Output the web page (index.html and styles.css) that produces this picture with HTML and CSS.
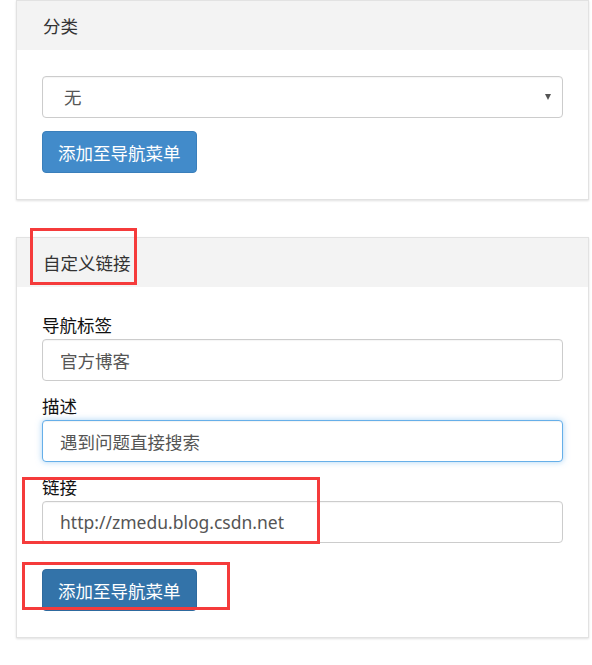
FILE: index.html
```html
<!DOCTYPE html>
<html lang="zh-CN">
<head>
<meta charset="utf-8">
<title>菜单</title>
<link rel="stylesheet" href="styles.css">
</head>
<body>
<div class="page">
  <section class="panel">
    <div class="panel-heading">分类</div>
    <div class="panel-body">
      <div class="select-wrap">
        <select class="form-control select">
          <option>无</option>
        </select>
      </div>
      <button class="btn btn-primary" type="button">添加至导航菜单</button>
    </div>
  </section>

  <section class="panel panel-second">
    <div class="panel-heading">自定义链接</div>
    <div class="panel-body">
      <div class="form-group">
        <label class="label">导航标签</label>
        <input class="form-control" type="text" value="官方博客">
      </div>
      <div class="form-group">
        <label class="label">描述</label>
        <input class="form-control focused" type="text" value="遇到问题直接搜索">
      </div>
      <div class="form-group">
        <label class="label">链接</label>
        <input class="form-control" type="text" value="http://zmedu.blog.csdn.net">
      </div>
      <button class="btn btn-active" type="button">添加至导航菜单</button>
    </div>
  </section>

  <div class="mark mark-title"></div>
  <div class="mark mark-link"></div>
  <div class="mark mark-btn"></div>
</div>
</body>
</html>
```

FILE: styles.css
```css
* { box-sizing: border-box; }

html, body {
  margin: 0;
  padding: 0;
  background: #fff;
}

body {
  font-family: "Noto Sans", "Noto Sans CJK SC", sans-serif;
  font-size: 17.5px;
  color: #333;
}

.page {
  position: relative;
  width: 592px;
  height: 665px;
  padding-left: 16px;
}

.panel {
  width: 573px;
  border: 1px solid #e2e2e2;
  background: #fff;
  box-shadow: 0 1px 2px rgba(0, 0, 0, 0.12);
}

.panel-second {
  margin-top: 37px;
}

.panel-heading {
  height: 49px;
  background: #f3f3f3;
  padding: 2px 26px 0;
  line-height: 47px;
  color: #333;
}

.panel-body {
  padding: 26px 25px 26px;
}

.form-control {
  display: block;
  width: 521px;
  height: 42px;
  border: 1px solid #cccccc;
  border-radius: 4px;
  padding: 0 17px;
  font-family: "Noto Sans", "Noto Sans CJK SC", sans-serif;
  font-size: 17.5px;
  color: #555;
  background: #fff;
  outline: none;
  box-shadow: inset 0 1px 1px rgba(0, 0, 0, 0.04);
}

.focused {
  border-color: #66afe9;
  box-shadow: inset 0 1px 1px rgba(0, 0, 0, 0.05), 0 0 6px rgba(102, 175, 233, 0.55);
}

.select-wrap {
  position: relative;
  width: 521px;
}

.select {
  -webkit-appearance: none;
  appearance: none;
  padding-left: 21px;
}

.select-wrap::after {
  content: "";
  position: absolute;
  right: 12px;
  top: 18px;
  border-left: 3.5px solid transparent;
  border-right: 3.5px solid transparent;
  border-top: 6px solid #555;
}

.btn {
  display: block;
  margin-top: 13px;
  height: 42px;
  padding: 0 15px;
  border-radius: 4px;
  font-family: "Noto Sans", "Noto Sans CJK SC", sans-serif;
  font-size: 17.5px;
  color: #fff;
  cursor: pointer;
}

.btn-primary {
  background: #428bca;
  border: 1px solid #3a7fbb;
}

.btn-active {
  margin-top: 26px;
  background: #3373a9;
  border: 1px solid #2e6a9e;
}

.form-group + .form-group {
  margin-top: 13px;
}

.label {
  display: block;
  line-height: 24px;
  margin-bottom: 2px;
  color: #111;
}

.mark {
  position: absolute;
  border: 3px solid #f53b3b;
}

.mark-title {
  left: 30px;
  top: 228px;
  width: 107px;
  height: 57px;
}

.mark-link {
  left: 22px;
  top: 477px;
  width: 298px;
  height: 67px;
}

.mark-btn {
  left: 22px;
  top: 562px;
  width: 208px;
  height: 48px;
}
```
